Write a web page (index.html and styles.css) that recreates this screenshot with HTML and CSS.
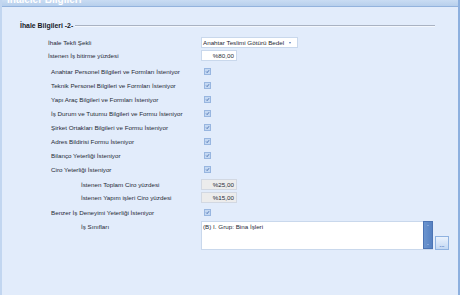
FILE: index.html
```html
<!DOCTYPE html>
<html lang="tr">
<head>
<meta charset="utf-8">
<link rel="stylesheet" href="styles.css">
</head>
<body>
<div class="window">
  <div class="titlebar"><span class="title-text">İhaleler Bilgileri</span></div>
  <div class="content">
    <div class="group-head">
      <span class="group-title">İhale Bilgileri -2-</span>
      <span class="rule"></span>
    </div>
    <div class="form">
      <div class="row r-combo">
        <span class="label in1">İhale Tekfi Şekli</span>
        <div class="combo"><span>Anahtar Teslimi Götürü Bedel</span><span class="arrow"></span></div>
      </div>
      <div class="row r-input">
        <span class="label in1">İstenen İş bitirme yüzdesi</span>
        <div class="num">%80,00</div>
      </div>
      <div class="row r-check first">
        <span class="label in2">Anahtar Personel Bilgileri ve Formları İsteniyor</span>
        <span class="check"><svg viewBox="0 0 7 7"><path d="M1.6 3.6 L3 5 L5.6 1.8"/></svg></span>
      </div>
      <div class="row r-check">
        <span class="label in2">Teknik Personel Bilgileri ve Formları İsteniyor</span>
        <span class="check"><svg viewBox="0 0 7 7"><path d="M1.6 3.6 L3 5 L5.6 1.8"/></svg></span>
      </div>
      <div class="row r-check">
        <span class="label in2">Yapı Araç Bilgileri ve Formları İsteniyor</span>
        <span class="check"><svg viewBox="0 0 7 7"><path d="M1.6 3.6 L3 5 L5.6 1.8"/></svg></span>
      </div>
      <div class="row r-check">
        <span class="label in2">İş Durum ve Tutumu Bilgileri ve Formu İsteniyor</span>
        <span class="check"><svg viewBox="0 0 7 7"><path d="M1.6 3.6 L3 5 L5.6 1.8"/></svg></span>
      </div>
      <div class="row r-check">
        <span class="label in2">Şirket Ortakları Bilgileri ve Formu İsteniyor</span>
        <span class="check"><svg viewBox="0 0 7 7"><path d="M1.6 3.6 L3 5 L5.6 1.8"/></svg></span>
      </div>
      <div class="row r-check">
        <span class="label in2">Adres Bildirisi Formu İsteniyor</span>
        <span class="check"><svg viewBox="0 0 7 7"><path d="M1.6 3.6 L3 5 L5.6 1.8"/></svg></span>
      </div>
      <div class="row r-check">
        <span class="label in2">Bilanço Yeterliği İsteniyor</span>
        <span class="check"><svg viewBox="0 0 7 7"><path d="M1.6 3.6 L3 5 L5.6 1.8"/></svg></span>
      </div>
      <div class="row r-check">
        <span class="label in2">Ciro Yeterliği İsteniyor</span>
        <span class="check"><svg viewBox="0 0 7 7"><path d="M1.6 3.6 L3 5 L5.6 1.8"/></svg></span>
      </div>
      <div class="row r-input gap3">
        <span class="label in3">İstenen Toplam Ciro yüzdesi</span>
        <div class="num disabled">%25,00</div>
      </div>
      <div class="row r-input">
        <span class="label in3">İstenen Yapım işleri Ciro yüzdesi</span>
        <div class="num disabled">%15,00</div>
      </div>
      <div class="row r-check last">
        <span class="label in2">Benzer İş Deneyimi Yeterliği İsteniyor</span>
        <span class="check"><svg viewBox="0 0 7 7"><path d="M1.6 3.6 L3 5 L5.6 1.8"/></svg></span>
      </div>
      <div class="row r-area">
        <span class="label in3 area-label">İş Sınıfları</span>
        <div class="memo">
          <span class="memo-text">(B) I. Grup: Bina İşleri</span>
          <span class="scroll"><span class="sa up"></span><span class="sa down"></span></span>
        </div>
        <div class="dots-btn"><span class="dots">...</span></div>
      </div>
    </div>
  </div>
</div>
</body>
</html>
```
FILE: styles.css
```css
html, body {
  margin: 0;
  padding: 0;
}
body {
  width: 460px;
  height: 295px;
  overflow: hidden;
  background: #e2ecfb;
  font-family: "Liberation Sans", Arial, sans-serif;
  font-size: 6.25px;
  color: #262b36;
}
.window {
  height: 295px;
  box-sizing: border-box;
  border-left: 2px solid #c2d6f0;
  border-right: 2px solid #8db0df;
  background: #e2ecfb;
}
.titlebar {
  height: 6px;
  border-bottom: 1px solid #93b3dd;
  background: linear-gradient(#c9dcf3, #b7cfec);
  overflow: hidden;
  padding-left: 5px;
}
.title-text {
  display: block;
  margin-top: -5px;
  font-size: 10px;
  line-height: 10px;
  font-weight: bold;
  color: #ffffff;
}
.content {
  padding-top: 13px;
}
.group-head {
  display: flex;
  align-items: center;
  height: 10px;
  padding-left: 18px;
  padding-right: 23px;
}
.group-title {
  font-weight: bold;
  font-size: 6.9px;
  color: #15181f;
}
.rule {
  flex: 1;
  height: 1px;
  margin-left: 2px;
  margin-top: 2px;
  background: #a9b2c2;
  border-bottom: 1px solid #f3f7fd;
}
.form {
  padding-top: 7px;
  display: flex;
  flex-direction: column;
}
.row {
  display: flex;
  align-items: center;
}
.label {
  box-sizing: border-box;
  width: 199px;
  flex: none;
  white-space: nowrap;
}
.in1 { padding-left: 46px; }
.in2 { padding-left: 49px; }
.in3 { padding-left: 79px; }
.r-combo { height: 11px; }
.r-input { height: 11px; margin-top: 2px; }
.r-check { height: 14px; }
.r-check.first { margin-top: 3px; }
.r-input.gap3 { margin-top: 3px; }
.r-check.last { height: 15px; margin-top: 2px; }
.combo {
  box-sizing: border-box;
  width: 97px;
  height: 11px;
  background: #ffffff;
  border: 1px solid #c9d8ec;
  display: flex;
  align-items: center;
  justify-content: space-between;
  padding-left: 1px;
  padding-right: 6px;
}
.arrow {
  width: 0;
  height: 0;
  border-left: 1.5px solid transparent;
  border-right: 1.5px solid transparent;
  border-top: 2px solid #5a7fbf;
}
.num {
  box-sizing: border-box;
  width: 36px;
  height: 11px;
  background: #ffffff;
  border: 1px solid #c9d8ec;
  text-align: right;
  padding-right: 2px;
  line-height: 9px;
}
.num.disabled {
  background: #ececec;
  border-color: #d2d8e2;
}
.check {
  box-sizing: border-box;
  width: 7px;
  height: 7px;
  margin-left: 3px;
  background: #c4d8f2;
  border: 1px solid #98b6e0;
  display: flex;
}
.check svg {
  width: 5px;
  height: 5px;
  overflow: visible;
}
.check path {
  fill: none;
  stroke: #2f5aa3;
  stroke-width: 1.1;
}
.r-area {
  align-items: flex-end;
  margin-top: 1px;
}
.area-label {
  align-self: flex-start;
  padding-top: 2px;
}
.memo {
  box-sizing: border-box;
  width: 232px;
  height: 29px;
  background: #ffffff;
  border: 1px solid #c9d8ec;
  border-right: none;
  display: flex;
  justify-content: space-between;
}
.memo-text {
  padding-left: 1px;
  padding-top: 1px;
  line-height: 8px;
}
.scroll {
  width: 10px;
  height: 28px;
  margin-top: -1px;
  background: linear-gradient(90deg, #6c95cf, #5681c2);
  border: 1px solid #4c74b4;
  box-sizing: border-box;
  display: flex;
  flex-direction: column;
  justify-content: space-between;
  align-items: center;
  padding: 3px 0;
}
.sa {
  width: 0;
  height: 0;
  border-left: 1.5px solid transparent;
  border-right: 1.5px solid transparent;
}
.sa.up { border-bottom: 1.5px solid #a9c2e6; }
.sa.down { border-top: 1.5px solid #a9c2e6; }
.dots-btn {
  box-sizing: border-box;
  width: 14px;
  height: 14px;
  margin-left: 2px;
  border: 1px solid #8fb2e0;
  background: linear-gradient(#eaf2fd, #c3d8f3);
  display: flex;
  align-items: flex-end;
  justify-content: center;
}
.dots {
  font-size: 6px;
  line-height: 8px;
  color: #5a7fbf;
  font-weight: bold;
}
```
